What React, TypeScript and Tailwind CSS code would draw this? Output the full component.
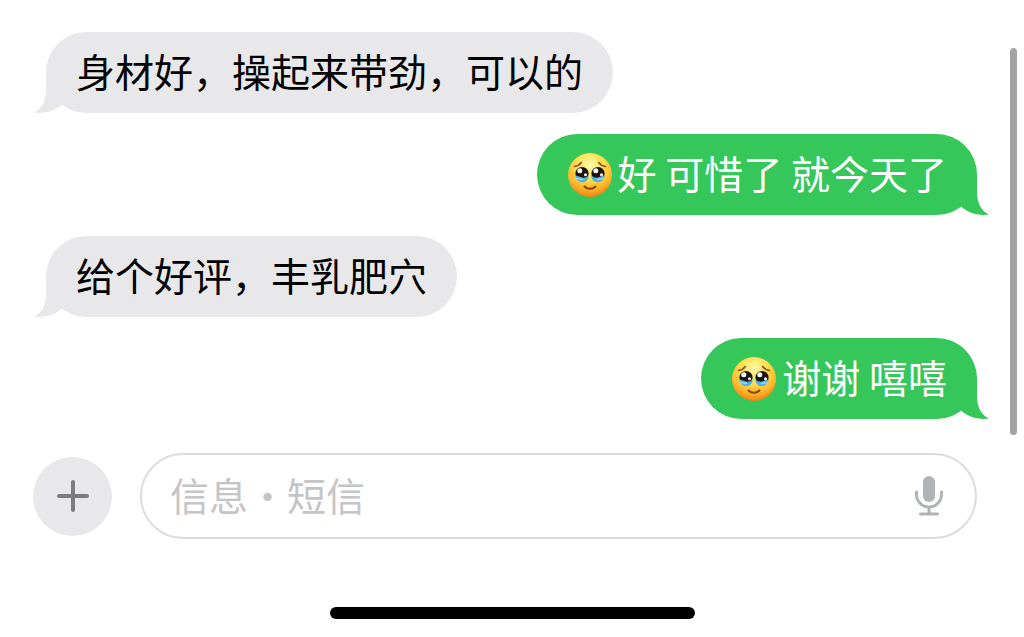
import React, { useId, useState } from 'react';

interface Message {
  id: number;
  text: string;
  mine: boolean;
  emoji?: boolean;
}

const messages: Message[] = [
  { id: 1, text: '身材好，操起来带劲，可以的', mine: false },
  { id: 2, text: '好 可惜了 就今天了', mine: true, emoji: true },
  { id: 3, text: '给个好评，丰乳肥穴', mine: false },
  { id: 4, text: '谢谢 嘻嘻', mine: true, emoji: true },
];

const TearyFace: React.FC = () => {
  const id = useId();
  return (
    <svg viewBox="0 0 46 46" className="w-[46px] h-[46px] mr-[5px] shrink-0" role="img" aria-label="🥹">
      <defs>
        <radialGradient id={`${id}face`} cx="0.5" cy="0.28" r="0.75">
          <stop offset="0" stopColor="#fffbae" />
          <stop offset="0.4" stopColor="#ffe052" />
          <stop offset="0.72" stopColor="#fdb62b" />
          <stop offset="1" stopColor="#e87a10" />
        </radialGradient>
      </defs>
      <circle cx="23" cy="23" r="22" fill={`url(#${id}face)`} />
      <path d="M7.500 14.500c2.800-.3 5.200-1.800 6.800-4M38.500 14.500c-2.800-.3-5.200-1.800-6.800-4" fill="none" stroke="#8a520f" strokeWidth="1.600" strokeLinecap="round" />
      <circle cx="15" cy="21.500" r="6.600" fill="#1b1411" />
      <circle cx="31" cy="21.500" r="6.600" fill="#1b1411" />
      {/* tears */}
      <path d="M8.300 22.800c1.700 1.900 3.500 1.300 5.400 2.200 2.300 1 5.200 1.200 7.900-1.500.3 3.800-2.300 6.700-6.300 6.700s-6.900-3-7-7.400zM37.700 22.800c-1.700 1.900-3.500 1.300-5.400 2.200-2.300 1-5.200 1.200-7.900-1.500-.3 3.800 2.300 6.700 6.300 6.700s6.900-3 7-7.400z" fill="#4fb3e4" />
      <path d="M9.500 26.200c2.200 1.500 4.300.6 6.200 1.200M36.500 26.200c-2.200 1.500-4.300.6-6.200 1.200" fill="none" stroke="#a4dcf5" strokeWidth="1.200" strokeLinecap="round" />
      <circle cx="12.800" cy="18.800" r="2.500" fill="#fff" />
      <circle cx="28.800" cy="18.800" r="2.500" fill="#fff" />
      <circle cx="18.500" cy="22.800" r="1.500" fill="#fff" />
      <circle cx="34.500" cy="22.800" r="1.500" fill="#fff" />
      <path d="M17.500 34.500c3 3 8 3 11 0" fill="none" stroke="#86430c" strokeWidth="2" strokeLinecap="round" />
    </svg>
  );
};

const Tail: React.FC<{ mine: boolean }> = ({ mine }) => (
  <svg
    viewBox="0 0 30 41"
    aria-hidden="true"
    className={`absolute bottom-0 w-[30px] h-[41px] ${mine ? '-right-3 -scale-x-100 text-[#35c759]' : '-left-3 text-[#e8e8ea]'}`}
  >
    <path d="M12 0v17C12 28 9 36 0 40.500C10 42 21 39 28 32.500V0Z" fill="currentColor" />
  </svg>
);

const Bubble: React.FC<{ message: Message }> = ({ message }) => (
  <li className={`flex ${message.mine ? 'justify-end' : 'justify-start'}`}>
    <div
      className={`relative flex items-center min-h-[81px] px-[30px] rounded-[41px] ${
        message.mine ? 'bg-[#35c759] text-white' : 'bg-[#e8e8ea] text-black'
      }`}
    >
      <Tail mine={message.mine} />
      {message.emoji && <TearyFace />}
      <p className="relative pb-1.5">{message.text}</p>
    </div>
  </li>
);

const MicIcon: React.FC = () => (
  <svg viewBox="0 0 28 40" className="w-7 h-10" aria-hidden="true">
    <rect x="8" y="0" width="12" height="26" rx="6" fill="#b0b3b7" />
    <path d="M1.500 16v2.500a12.500 12.500 0 0 0 25 0V16M14 31v7M5.500 38h17" fill="none" stroke="#b0b3b7" strokeWidth="3" strokeLinecap="round" />
  </svg>
);

export default function App() {
  const [draft, setDraft] = useState('');

  return (
    <div className="min-h-screen bg-white flex flex-col text-[39px] leading-[56px] font-['Noto_Sans_CJK_SC',sans-serif]" lang="zh-CN">
      <main className="relative pt-8 pb-4">
        <ul className="flex flex-col gap-[21px] pl-[46px] pr-[47px]">
          {messages.map((message) => (
            <Bubble key={message.id} message={message} />
          ))}
        </ul>
        {/* SCROLL INDICATOR */}
        <div className="absolute top-12 bottom-0 right-[7px] w-[7px] rounded-full bg-[#a4a4a4]" />
      </main>

      {/* COMPOSER */}
      <form className="flex items-center gap-7 mt-[18px] pl-[33px] pr-[47px]" onSubmit={(e) => e.preventDefault()}>
        <button type="button" aria-label="添加" className="w-[79px] h-[79px] shrink-0 rounded-full bg-[#e8e8ea] flex items-center justify-center">
          <svg viewBox="0 0 32 32" className="w-8 h-8" aria-hidden="true">
            <path d="M16 2v28M2 16h28" stroke="#7c7c80" strokeWidth="4" strokeLinecap="round" />
          </svg>
        </button>
        <div className="flex-1 min-w-0 h-[86px] flex items-center rounded-full border-2 border-[#dcdcdd] pl-7 pr-8">
          <input
            type="text"
            aria-label="信息・短信"
            placeholder="信息・短信"
            value={draft}
            onChange={(e) => setDraft(e.target.value)}
            className="flex-1 min-w-0 pb-1 bg-transparent outline-none placeholder:text-[#c5c5c7]"
          />
          <button type="button" aria-label="听写" className="shrink-0">
            <MicIcon />
          </button>
        </div>
      </form>

      {/* HOME INDICATOR */}
      <div className="mt-[68px] mx-auto w-[365px] h-3 rounded-full bg-black" />
    </div>
  );
}
